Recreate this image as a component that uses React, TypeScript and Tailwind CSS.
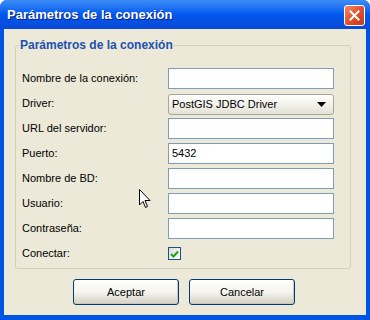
import React from "react";

const rows = [
  { label: "Nombre de la conexión:", value: "" },
  { label: "Driver:", combo: "PostGIS JDBC Driver" },
  { label: "URL del servidor:", value: "" },
  { label: "Puerto:", value: "5432" },
  { label: "Nombre de BD:", value: "" },
  { label: "Usuario:", value: "" },
  { label: "Contraseña:", value: "" },
];

function XpButton({ children }: { children: React.ReactNode }) {
  return (
    <button className="flex h-[26px] w-[106px] items-center justify-center rounded-[3px] border border-[#003c74] bg-gradient-to-b from-[#ffffff] via-[#f5f4ef] to-[#d6d0c5] text-[11px] text-black shadow-[inset_-1px_-1px_0_#cbc7b8]">
      {children}
    </button>
  );
}

export default function App() {
  return (
    <div
      className="flex h-[320px] w-[370px] flex-col overflow-hidden rounded-t-[7px] bg-[#0054e3]"
      style={{ fontFamily: '"Liberation Sans", Arial, sans-serif' }}
    >
      {/* title bar */}
      <div className="flex h-[29px] shrink-0 items-center justify-between bg-gradient-to-b from-[#3c8cf6] via-[#0058ee] to-[#0a49d8] pl-[7px] pr-[5px]">
        <span className="text-[13px] font-bold text-white [text-shadow:1px_1px_0_#0a1e8c]">
          Parámetros de la conexión
        </span>
        <div className="mt-[2px] flex h-[21px] w-[21px] items-center justify-center rounded-[3px] border border-white bg-gradient-to-br from-[#f08a68] via-[#e0512b] to-[#c23a18]">
          <svg width="11" height="11" viewBox="0 0 11 11">
            <path d="M1.5 1.5 L9.5 9.5 M9.5 1.5 L1.5 9.5" stroke="white" strokeWidth="2" strokeLinecap="square" />
          </svg>
        </div>
      </div>

      {/* client area */}
      <div className="relative mx-[4px] mb-[5px] flex-1 bg-[#ece9d8] pt-[9px]">
        <fieldset className="ml-[11px] mr-[15px] rounded-[3px] border border-[#d0d0bf] pb-[4px] pl-[6px] pr-[12px]">
          <legend className="-ml-[3px] px-[1px] text-[12px] font-bold leading-[14px] text-[#2150b0]">
            Parámetros de la conexión
          </legend>
          <div className="mt-[16px] flex flex-col gap-[4px]">
            {rows.map((r) => (
              <div key={r.label} className="flex h-[21px] items-center">
                <span className="w-[146px] text-[11px] text-black">{r.label}</span>
                {r.combo ? (
                  <div className="mt-[2px] flex h-[21px] w-[166px] items-center justify-between rounded-[3px] border border-[#a7a69a] bg-gradient-to-b from-[#ffffff] to-[#e4e2d6] pl-[3px] pr-[7px] text-[11px] text-black">
                    <span>{r.combo}</span>
                    <svg width="9" height="5" viewBox="0 0 9 5">
                      <path d="M0 0 H9 L4.5 5 Z" fill="black" />
                    </svg>
                  </div>
                ) : (
                  <div className="flex h-[21px] w-[166px] items-center border border-[#7f9db9] bg-white pl-[3px] text-[11px] text-black">
                    {r.value}
                  </div>
                )}
              </div>
            ))}
            <div className="flex h-[21px] items-center">
              <span className="w-[146px] text-[11px] text-black">Conectar:</span>
              <div className="flex h-[13px] w-[13px] items-center justify-center border border-[#1c5180] bg-gradient-to-br from-[#dcdcd7] to-[#ffffff]">
                <svg width="9" height="8" viewBox="0 0 9 8">
                  <path d="M1 4 L3.5 6.5 L8 1.5" stroke="#21a121" strokeWidth="2" fill="none" />
                </svg>
              </div>
            </div>
          </div>
        </fieldset>

        <div className="mt-[10px] flex gap-[10px] pl-[69px]">
          <XpButton>Aceptar</XpButton>
          <XpButton>Cancelar</XpButton>
        </div>

        {/* mouse pointer */}
        <svg className="absolute left-[135px] top-[160px]" width="12" height="20" viewBox="0 0 12 20">
          <path d="M0.5 0.5 V16 L4 12.5 L6.5 18.5 L8.5 17.5 L6 11.5 H11 Z" fill="white" stroke="black" strokeWidth="1" />
        </svg>
      </div>
    </div>
  );
}
